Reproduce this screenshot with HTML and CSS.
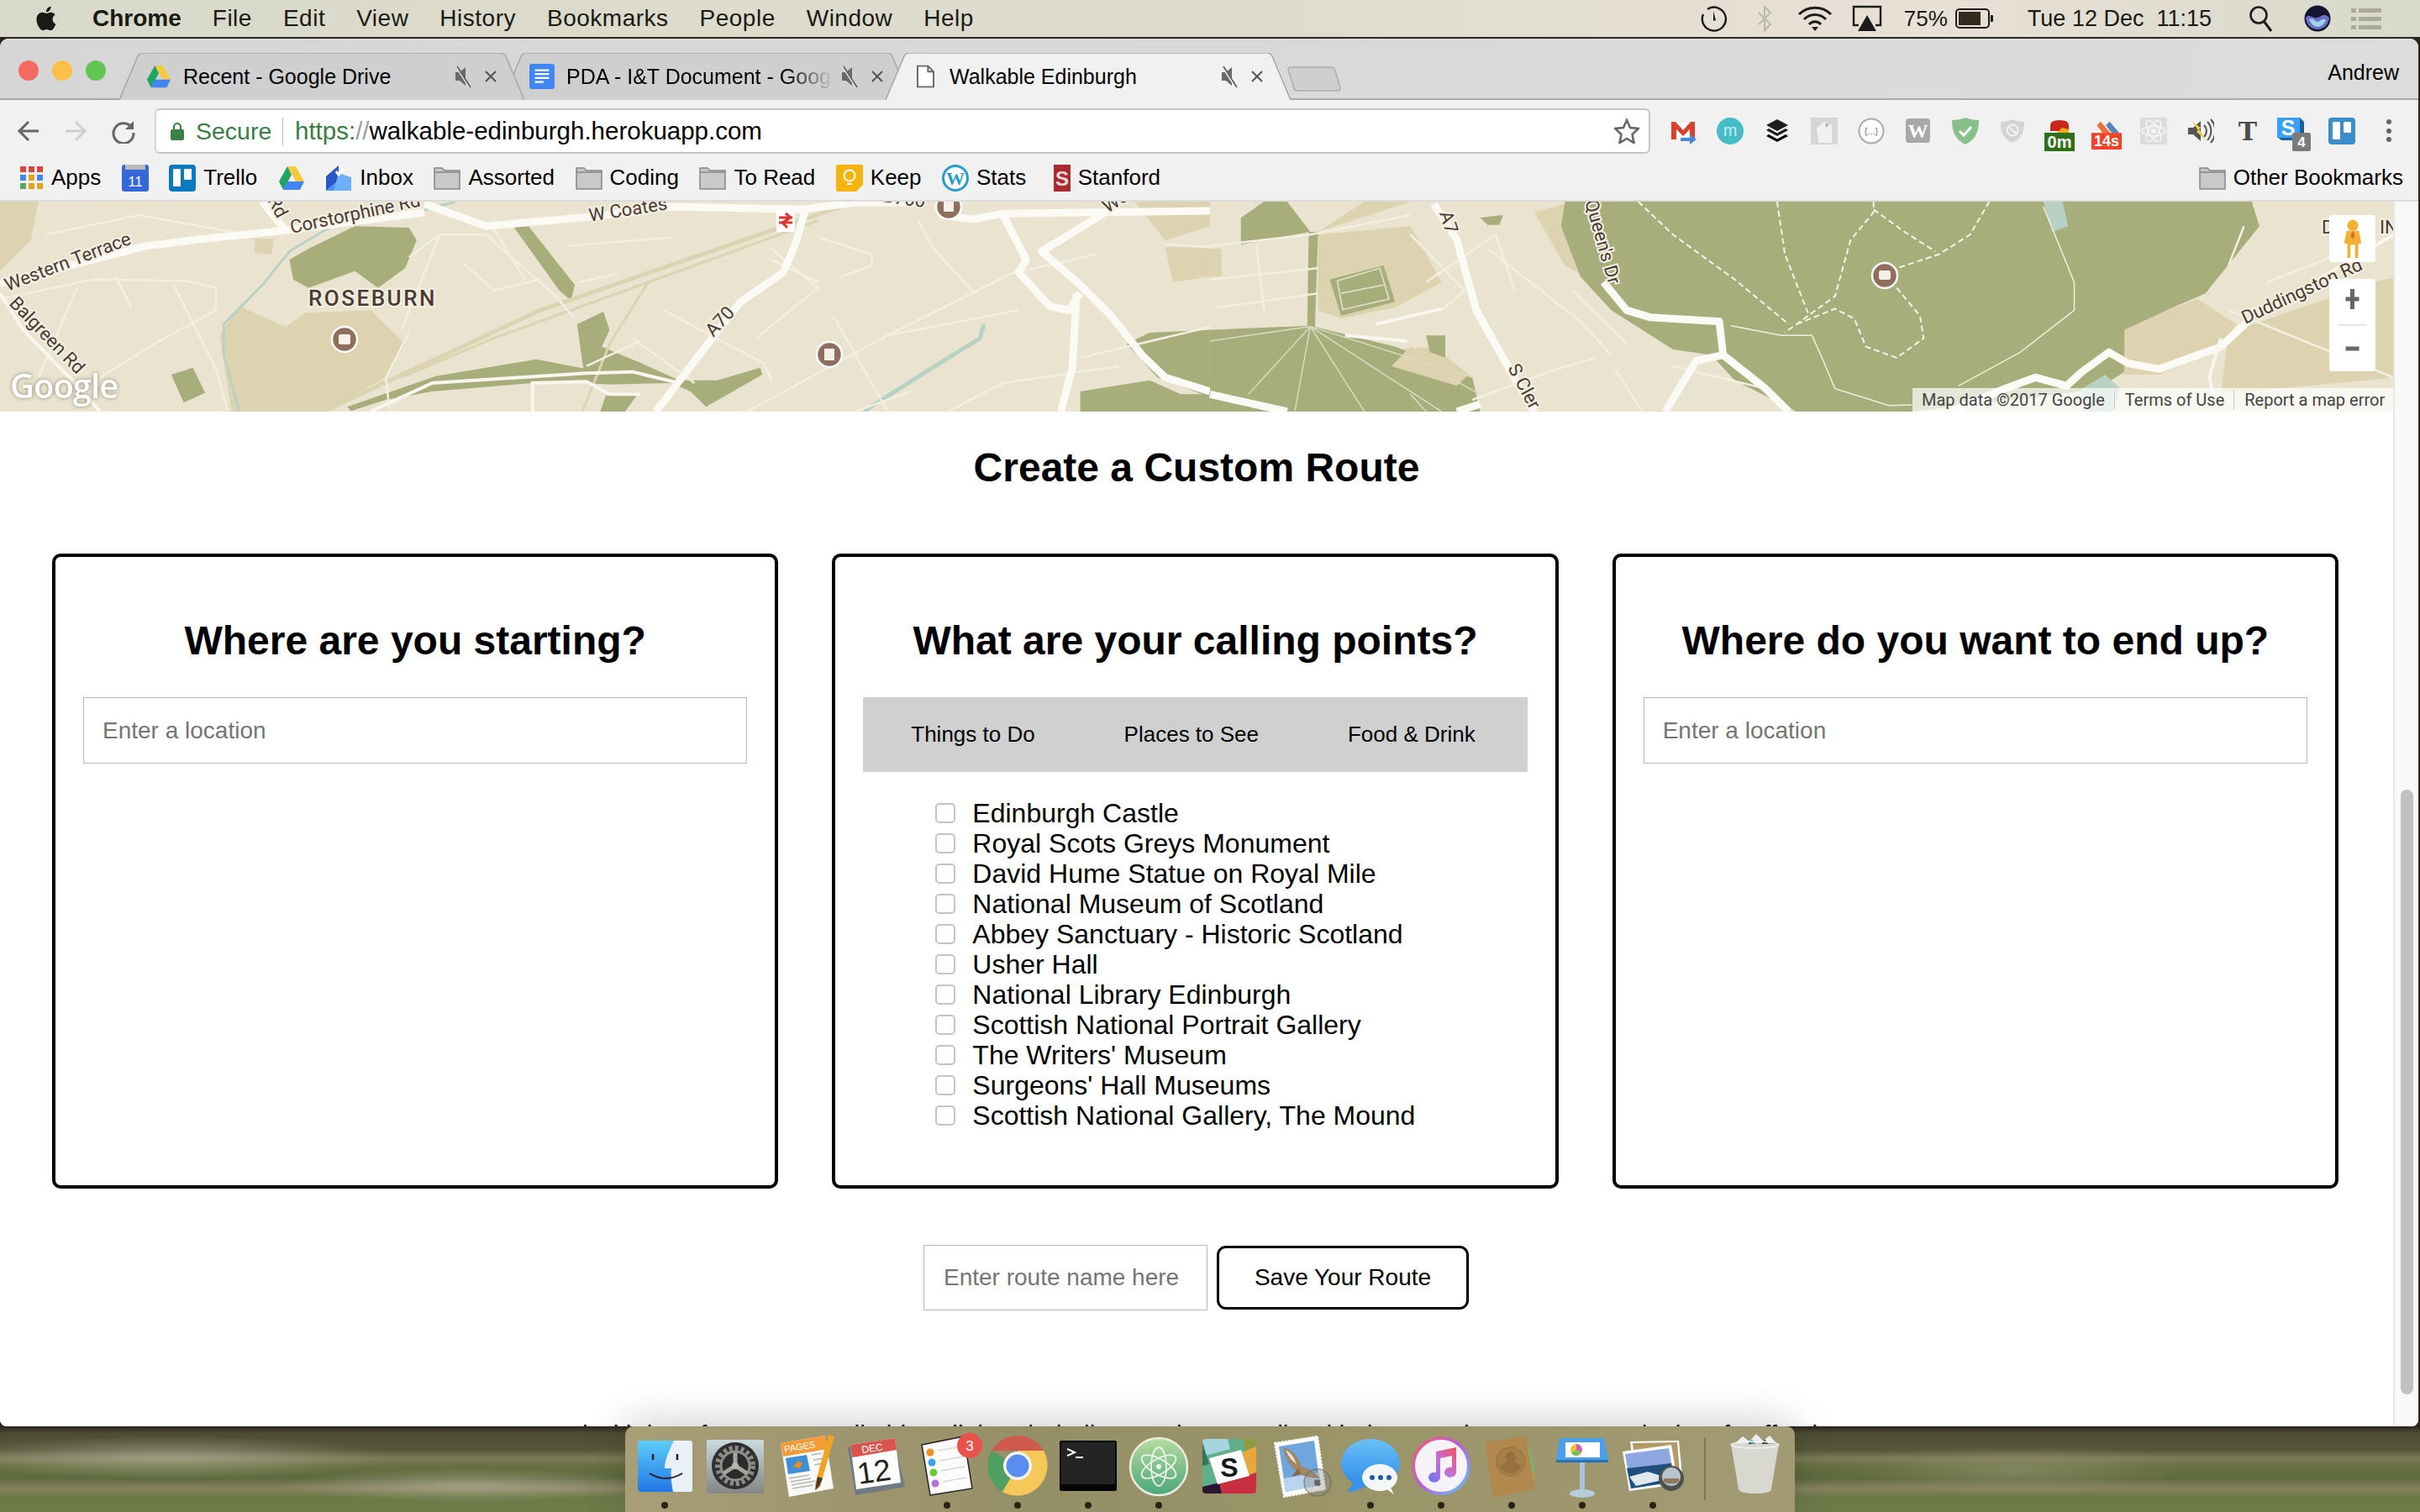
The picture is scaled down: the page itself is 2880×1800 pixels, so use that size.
FILE: index.html
```html
<!DOCTYPE html>
<html>
<head>
  <meta charset="UTF-8" />
  <title>Walkable Edinburgh</title>
  <link rel="stylesheet" href="styles.css">
</head>
<body>
  <!-- mac menu bar -->
  <div class="menubar">
    <svg class="apple" viewBox="0 0 24 24"><path d="M18.71 19.5c-.83 1.24-1.71 2.45-3.05 2.47-1.34.03-1.77-.79-3.29-.79-1.53 0-2 .77-3.27.82-1.31.05-2.3-1.32-3.14-2.53C4.25 17 2.94 12.45 4.7 9.39c.87-1.52 2.43-2.48 4.12-2.51 1.28-.02 2.5.87 3.29.87.78 0 2.26-1.07 3.81-.91.65.03 2.47.26 3.64 1.98-.09.06-2.17 1.28-2.15 3.81.03 3.02 2.65 4.03 2.68 4.04-.03.07-.42 1.44-1.38 2.83M13 3.5c.73-.83 1.94-1.46 2.94-1.5.13 1.17-.34 2.35-1.04 3.19-.69.85-1.83 1.51-2.95 1.42-.15-1.15.41-2.35 1.05-3.11z"/></svg>
    <span class="menu-app">Chrome</span>
    <span>File</span><span>Edit</span><span>View</span><span>History</span><span>Bookmarks</span><span>People</span><span>Window</span><span>Help</span>
    <div class="status">
      <svg class="st-tm" viewBox="0 0 32 32"><path d="M8 5a14 14 0 1 1-5 6" fill="none" stroke="#1c1c1c" stroke-width="2.4"/><path d="M15 7l3 11-3 1z" fill="#1c1c1c"/></svg>
      <svg class="st-bt" viewBox="0 0 20 32"><path d="M3 9l14 14-7 7V2l7 7L3 23" fill="none" stroke="#b9b8ac" stroke-width="2"/></svg>
      <svg class="st-wifi" viewBox="0 0 44 32"><g fill="none" stroke="#1c1c1c" stroke-width="3"><path d="M3 11a27 27 0 0 1 38 0"/><path d="M9 17a18 18 0 0 1 26 0"/><path d="M15 23a9 9 0 0 1 14 0"/></g><path d="M22 31l-4-5h8z" fill="#1c1c1c"/></svg>
      <svg class="st-air" viewBox="0 0 36 32"><path d="M8 24H2V2h32v22h-6" fill="none" stroke="#1c1c1c" stroke-width="2.4"/><path d="M18 12l11 19H7z" fill="#1c1c1c"/></svg>
      <span class="st-pct">75%</span>
      <svg class="st-batt" viewBox="0 0 46 26"><rect x="1" y="2" width="39" height="22" rx="4" fill="none" stroke="#1c1c1c" stroke-width="2"/><rect x="4" y="5" width="26" height="16" fill="#32291f"/><path d="M42 9h2a1 1 0 0 1 1 1v6a1 1 0 0 1-1 1h-2z" fill="#1c1c1c"/></svg>
      <span class="st-date">Tue 12 Dec&nbsp; 11:15</span>
      <svg class="st-search" viewBox="0 0 30 32"><circle cx="12" cy="12" r="9.5" fill="none" stroke="#1c1c1c" stroke-width="2.6"/><path d="M18 19l9 12" stroke="#1c1c1c" stroke-width="3"/></svg>
      <svg class="st-siri" viewBox="0 0 32 32"><circle cx="16" cy="16" r="15.5" fill="#14142e"/><path d="M2 15c5-6 8 2 14 0s8-6 14 0c-1 9-7 14-14 14S3 24 2 15z" fill="#6b6fc9"/><path d="M6 17c5-3 7 3 10 3s6-6 10-2c-2 5-6 8-10 8s-8-4-10-9z" fill="#9ed3e6"/></svg>
      <svg class="st-list" viewBox="0 0 36 28"><g fill="#a9a89b"><rect x="0" y="2" width="6" height="5"/><rect x="9" y="2" width="27" height="5"/><rect x="0" y="12" width="6" height="5"/><rect x="9" y="12" width="27" height="5"/><rect x="0" y="22" width="6" height="5"/><rect x="9" y="22" width="27" height="5"/></g></svg>
    </div>
  </div>

  <div class="window">
    <!-- tab strip -->
    <div class="titlebar">
      <div class="lights"><i class="red"></i><i class="yellow"></i><i class="green"></i></div>
      <div class="tab tab-first">
        <svg class="tab-shape" viewBox="0 0 482 56" preserveAspectRatio="none"><path d="M0 56L22 4Q24 0 28 0H454Q458 0 460 4L482 56"/></svg>
        <svg class="fav" viewBox="0 0 32 30"><path d="M11 1h10l10 18H21z" fill="#f7c93e"/><path d="M11 1L1 19l5 10 10-18z" fill="#1fa463"/><path d="M6 29h20l5-10H11z" fill="#4285f4"/></svg>
        <span class="tab-title">Recent - Google Drive</span>
        <svg class="mute" viewBox="0 0 22 30"><path d="M2 10h5l7-6v22l-7-6H2z" fill="#6a6a6a"/><path d="M3 3l16 25" stroke="#e0e0e0" stroke-width="3"/><path d="M4 3l16 25" stroke="#555" stroke-width="1.5"/></svg>
        <svg class="close" viewBox="0 0 16 16"><path d="M2 2l12 12M14 2L2 14" stroke="#555" stroke-width="2"/></svg>
      </div>
      <div class="tab tab-second">
        <svg class="tab-shape" viewBox="0 0 482 56" preserveAspectRatio="none"><path d="M0 56L22 4Q24 0 28 0H454Q458 0 460 4L482 56"/></svg>
        <svg class="fav" viewBox="0 0 32 32"><rect width="32" height="32" rx="3" fill="#4285f4"/><path d="M7 8h18M7 13h18M7 18h18M7 23h11" stroke="#fff" stroke-width="2.4"/></svg>
        <span class="tab-title tab-fade">PDA - I&amp;T Document - Google Docs</span>
        <svg class="mute" viewBox="0 0 22 30"><path d="M2 10h5l7-6v22l-7-6H2z" fill="#6a6a6a"/><path d="M3 3l16 25" stroke="#e0e0e0" stroke-width="3"/><path d="M4 3l16 25" stroke="#555" stroke-width="1.5"/></svg>
        <svg class="close" viewBox="0 0 16 16"><path d="M2 2l12 12M14 2L2 14" stroke="#555" stroke-width="2"/></svg>
      </div>
      <div class="tab tab-active">
        <svg class="tab-shape" viewBox="0 0 482 56" preserveAspectRatio="none"><path d="M0 56L22 4Q24 0 28 0H454Q458 0 460 4L482 56"/></svg>
        <svg class="fav fav-doc" viewBox="0 0 22 28"><path d="M1 1h13l7 7v19H1z" fill="#fff" stroke="#666" stroke-width="2"/><path d="M14 1v7h7" fill="none" stroke="#666" stroke-width="2"/></svg>
        <span class="tab-title">Walkable Edinburgh</span>
        <svg class="mute" viewBox="0 0 22 30"><path d="M2 10h5l7-6v22l-7-6H2z" fill="#6a6a6a"/><path d="M3 3l16 25" stroke="#f1f1f1" stroke-width="3"/><path d="M4 3l16 25" stroke="#555" stroke-width="1.5"/></svg>
        <svg class="close" viewBox="0 0 16 16"><path d="M2 2l12 12M14 2L2 14" stroke="#555" stroke-width="2"/></svg>
      </div>
      <svg class="newtab" viewBox="0 0 64 30"><path d="M4 1H52Q56 1 57 5L63 26Q63 29 60 29H12Q8 29 8 26L1 4Q1 1 4 1z" fill="#cfcfcf" stroke="#acacac" stroke-width="1.5"/></svg>
      <span class="profile">Andrew</span>
    </div>

    <!-- address bar -->
    <div class="toolbar">
      <svg class="nav nav-back" viewBox="0 0 30 30"><path d="M27 15H5M15 4L4 15l11 11" fill="none" stroke="#666" stroke-width="3"/></svg>
      <svg class="nav nav-fwd" viewBox="0 0 30 30"><path d="M3 15h22M15 4l11 11-11 11" fill="none" stroke="#cfcfcf" stroke-width="3"/></svg>
      <svg class="nav nav-reload" viewBox="0 0 30 30"><path d="M25 11A12 12 0 1 0 27 17" fill="none" stroke="#666" stroke-width="3"/><path d="M27 3v10H17z" fill="#666"/></svg>
      <div class="omnibox">
        <svg class="lock" viewBox="0 0 16 24"><path d="M4 10V7a4 4 0 0 1 8 0v3" fill="none" stroke="#3b8048" stroke-width="2.2"/><rect x="0" y="10" width="16" height="13" rx="2" fill="#3b8048"/></svg>
        <span class="secure">Secure</span>
        <span class="url"><span class="scheme">https:</span><span class="slashes">//</span>walkable-edinburgh.herokuapp.com</span>
        <svg class="star" viewBox="0 0 30 30"><path d="M15 2l4 9 10 1-7.500 7 2 10L15 24l-8.500 5 2-10L1 12l10-1z" fill="none" stroke="#666" stroke-width="2.600"/></svg>
      </div>
      <div class="extensions">
        <svg viewBox="0 0 32 32"><path d="M2 6h28v20H2z" fill="#fff"/><path d="M2 5h5l9 10 9-10h5v21h-6V14l-8 8-8-8v12H2z" fill="#d8402f"/><path d="M13 24h11v-4l8 6-8 6v-4H13z" fill="#4a86d8"/></svg>
        <svg viewBox="0 0 32 32"><circle cx="16" cy="16" r="16" fill="#46bcc4"/><text class="ext-m" x="16" y="22" text-anchor="middle">m</text></svg>
        <svg viewBox="0 0 32 32"><path d="M16 2l13 7-13 7-13-7z" fill="#1b1d20"/><path d="M6 13l10 5.500L26 13l3 2-13 7-13-7z" fill="#1b1d20"/><path d="M6 20l10 5.500L26 20l3 2-13 7-13-7z" fill="#000"/></svg>
        <svg viewBox="0 0 32 32"><rect width="32" height="32" fill="#d6d6d6"/><path d="M7 12l10-8 4 5 4-1v22H9z" fill="#f1f1f1"/><path d="M17 6l4 3-3 3z" fill="#aaa"/></svg>
        <svg viewBox="0 0 32 32"><circle cx="16" cy="16" r="14.500" fill="#fff" stroke="#aaa" stroke-width="2"/><text class="ext-code" x="16" y="20" text-anchor="middle">{...}</text></svg>
        <svg viewBox="0 0 32 32"><rect x="1" y="1" width="29" height="29" rx="4" fill="#a8a8a8"/><text class="ext-w" x="15.500" y="24" text-anchor="middle">W</text></svg>
        <svg viewBox="0 0 32 32"><path d="M16 0c5 2 10 3 16 3 0 14-4 23-16 29C4 26 0 17 0 3c6 0 11-1 16-3z" fill="#88c08b"/><path d="M9 16l5 5 9-10" fill="none" stroke="#fff" stroke-width="3"/></svg>
        <svg viewBox="0 0 32 32"><path d="M16 2c4 2 9 3 14 3 0 12-3 20-14 25C5 25 2 17 2 5c5 0 10-1 14-3z" fill="#d3d3d3"/><circle cx="16" cy="15" r="6.500" fill="none" stroke="#f3f3f3" stroke-width="2"/><path d="M12 11l8 8" stroke="#f3f3f3" stroke-width="2"/></svg>
        <svg class="ext-wide" viewBox="0 0 36 40"><path d="M7 16V9q0-6 11-6t11 6v7z" fill="#c9261c"/><path d="M15 18l6-6 8 2v4z" fill="#f2a71b"/><rect y="18" width="36" height="22" fill="#2f7016"/><text class="ext-badge" x="18" y="36" text-anchor="middle">0m</text></svg>
        <svg class="ext-wide" viewBox="0 0 40 40"><path d="M7 8l5-5 13 15h-10z" fill="#ef7036"/><path d="M19 8l5-5 13 15H27z" fill="#5b82bd"/><rect y="18" width="40" height="22" fill="#f0432a"/><text class="ext-badge" x="20" y="36" text-anchor="middle">14s</text></svg>
        <svg viewBox="0 0 32 32"><rect width="32" height="32" rx="2" fill="#dcdcdc"/><g fill="none" stroke="#f5f5f5" stroke-width="1.600"><ellipse cx="16" cy="16" rx="14" ry="6"/><ellipse cx="16" cy="16" rx="14" ry="6" transform="rotate(60 16 16)"/><ellipse cx="16" cy="16" rx="14" ry="6" transform="rotate(120 16 16)"/></g><circle cx="16" cy="16" r="3" fill="#f5f5f5"/></svg>
        <svg viewBox="0 0 32 32"><path d="M1 12h6l9-8v24l-9-8H1z" fill="#555"/><path d="M20 9a10 10 0 0 1 0 14M24 5a16 16 0 0 1 0 22M28 2a21 21 0 0 1 0 28" fill="none" stroke="#555" stroke-width="2"/><path d="M6 5l10 7-2 2 9 13-12-10 2-2z" fill="#efd63d"/></svg>
        <svg viewBox="0 0 32 32"><text class="ext-t" x="16" y="27" text-anchor="middle">T</text></svg>
        <svg class="ext-s" viewBox="0 0 42 42"><path d="M0 0h27l5 5v22H5l-5-4z" fill="#1d5f9c"/><rect width="27" height="24" fill="#38a1f3"/><text class="ext-sl" x="13" y="21" text-anchor="middle">S</text><rect x="18" y="18" width="22" height="22" rx="2" fill="#7a7a7a"/><text class="ext-four" x="29" y="35" text-anchor="middle">4</text></svg>
        <svg viewBox="0 0 32 32"><rect width="32" height="32" rx="4" fill="#3a8fcb"/><rect x="5" y="5" width="9" height="21" rx="1.500" fill="#fff"/><rect x="18" y="5" width="9" height="13" rx="1.500" fill="#fff"/></svg>
        <svg viewBox="0 0 32 32"><g fill="#666"><circle cx="16" cy="5" r="3"/><circle cx="16" cy="16" r="3"/><circle cx="16" cy="26" r="3"/></g></svg>
      </div>
    </div>

    <div class="bookmarks">
      <div class="bm"><svg class="bm-apps" viewBox="0 0 28 28"><g fill="#d9483b"><rect width="7" height="7"/><rect x="10" width="7" height="7"/><rect x="20" width="7" height="7"/></g><rect y="10" width="7" height="7" fill="#4285f4"/><rect x="10" y="10" width="7" height="7" fill="#e3a021"/><rect x="20" y="10" width="7" height="7" fill="#4285f4"/><g fill="#e3a021"><rect y="20" width="7" height="7" fill="#5aa85b"/><rect x="10" y="20" width="7" height="7"/><rect x="20" y="20" width="7" height="7"/></g></svg>Apps</div>
      <div class="bm"><svg class="bm-icon" viewBox="0 0 32 32"><rect width="32" height="32" rx="3" fill="#3468d8"/><rect x="4" width="24" height="6" fill="#b9b9b9"/><text class="bm-cal" x="16" y="26" text-anchor="middle">11</text></svg></div>
      <div class="bm"><svg class="bm-icon" viewBox="0 0 32 32"><rect width="32" height="32" rx="4" fill="#0b79bf"/><rect x="5" y="5" width="9" height="21" rx="1" fill="#fff"/><rect x="18" y="5" width="9" height="13" rx="1" fill="#fff"/></svg>Trello</div>
      <div class="bm"><svg class="bm-icon" viewBox="0 0 32 30"><path d="M11 1h10l10 18H21z" fill="#f7c93e"/><path d="M11 1L1 19l5 10 10-18z" fill="#1fa463"/><path d="M6 29h20l5-10H11z" fill="#4285f4"/></svg></div>
      <div class="bm"><svg class="bm-icon" viewBox="0 0 32 32"><path d="M1 14L16 1v18L1 31z" fill="#2a56c6"/><path d="M1 31l15-12h15v12z" fill="#4d90fe"/><path d="M16 10l15 5v16H10z" fill="#6eb0f7"/><path d="M13 8l3 4 6-8" fill="none" stroke="#fff" stroke-width="3"/></svg>Inbox</div>
      <div class="bm"><svg class="bm-folder" viewBox="0 0 32 28"><path d="M1 27V2h9l3 3h18v22z" fill="#c9c9c9" stroke="#868686" stroke-width="1.500"/><path d="M1 7h30" stroke="#868686" stroke-width="1.500"/></svg>Assorted</div>
      <div class="bm"><svg class="bm-folder" viewBox="0 0 32 28"><path d="M1 27V2h9l3 3h18v22z" fill="#c9c9c9" stroke="#868686" stroke-width="1.500"/><path d="M1 7h30" stroke="#868686" stroke-width="1.500"/></svg>Coding</div>
      <div class="bm"><svg class="bm-folder" viewBox="0 0 32 28"><path d="M1 27V2h9l3 3h18v22z" fill="#c9c9c9" stroke="#868686" stroke-width="1.500"/><path d="M1 7h30" stroke="#868686" stroke-width="1.500"/></svg>To Read</div>
      <div class="bm"><svg class="bm-icon" viewBox="0 0 32 32"><path d="M2 0h28a2 2 0 0 1 2 2v22l-8 8H2a2 2 0 0 1-2-2V2a2 2 0 0 1 2-2z" fill="#f6b40e"/><circle cx="16" cy="13" r="6.500" fill="none" stroke="#fff" stroke-width="2"/><path d="M13 23h6" stroke="#fff" stroke-width="2"/></svg>Keep</div>
      <div class="bm"><svg class="bm-icon" viewBox="0 0 32 32"><circle cx="16" cy="16" r="14.500" fill="#fff" stroke="#2a9ad0" stroke-width="3"/><text class="bm-wp" x="16" y="24" text-anchor="middle">W</text></svg>Stats</div>
      <div class="bm"><svg class="bm-stanford" viewBox="0 0 20 32"><rect width="20" height="32" fill="#a92a30"/><text class="bm-s" x="10" y="25" text-anchor="middle">S</text></svg>Stanford</div>
      <div class="bm bm-other"><svg class="bm-folder" viewBox="0 0 32 28"><path d="M1 27V2h9l3 3h18v22z" fill="#c9c9c9" stroke="#868686" stroke-width="1.500"/><path d="M1 7h30" stroke="#868686" stroke-width="1.500"/></svg>Other Bookmarks</div>
    </div>

    <div class="viewport">
      <div class="page">
        <div class="map">
          <svg class="map-canvas" viewBox="0 240 2848 250" preserveAspectRatio="none">
            <rect x="0" y="240" width="2848" height="250" fill="#e9e3cf"/>
            <!-- west half, traced from the full width crop -->
            <g transform="matrix(0.9183 0 0 0.3333 0 236)" class="layer">
              <polygon class="tan" points="0,12 50,12 40,150 0,260"/>
              <polygon class="tan" points="330,145 355,145 352,200 330,195"/>
              <polygon class="tan" points="285,490 310,385 370,460 395,410 480,400 525,520 500,640 420,762 300,762"/>
              <polygon class="tan" points="1470,12 1568,12 1568,100 1510,150 1490,80"/>
              <polygon class="tan" points="1510,175 1568,175 1568,280 1520,300"/>
              <polygon class="park" points="460,100 530,105 540,150 525,250 490,320 460,260 400,320 380,290 375,220 400,180"/>
              <polygon class="park" points="665,100 685,100 745,310 740,365 725,330"/>
              <polygon class="park" points="748,450 782,405 790,470 780,530 840,600 880,650 930,650 985,605 988,630 915,745 895,690 870,660 790,665 760,660 755,590"/>
              <polygon class="park" points="565,635 695,575 760,610 850,625 870,660 690,660 560,690 500,720 455,760 450,745"/>
              <polygon class="park" points="222,630 250,605 266,695 238,730"/>
              <polygon class="park" points="785,705 825,705 810,762 778,762"/>
              <polygon class="park" points="1460,520 1490,480 1568,470 1568,710 1500,640"/>
              <polygon class="park" points="1400,690 1490,650 1530,700 1568,700 1568,762 1400,762"/>
              <path class="rail" d="M1100 20L700 400L420 760"/>
              <path class="rail-thin" d="M1060 80L640 500L520 640M840 300L790 520L755 760"/>
              <path class="water" d="M590 12L540 50L430 100L375 190L340 310L290 450L290 560L310 760"/>
              <path class="water-wide" d="M1275 450L1270 500L1200 620L1120 760"/>
              <path class="minor" d="M0 360L120 290L240 295L280 320L280 400L200 520L130 640M60 130L180 60L300 120M150 280L170 390M225 310L280 610L295 760M100 320L50 640M570 130L630 130L720 350L745 430M520 470L570 130L530 210M530 480L500 640L505 762M600 230L640 330L700 290M735 170L870 140M750 300L800 270M980 500L1060 320L1000 180M1000 220L1060 300M1060 140L1130 200L1130 240L1090 280M1150 490L1310 270L1420 200M1510 165L1568 175M1320 400L1150 490L970 760M1080 420L1150 760M1400 570L1568 460M1190 80L1210 180L1260 330M820 500L900 660M860 400L990 590L1000 650M1180 690L1110 760M1450 600L1300 660L1230 760M640 110L680 290M760 600L830 510"/>
              <path class="road" d="M0 305L190 170L280 140L370 115"/>
              <path class="road" d="M370 115L340 12"/>
              <path class="road" d="M370 115L550 50"/>
              <path class="road" d="M550 20L630 100L770 65L870 30L1040 40L1110 15L1190 15"/>
              <path class="road" d="M1045 30L1030 170L1015 265L960 370L920 510L850 762"/>
              <path class="road" d="M1220 60L1260 75L1300 55L1430 50L1568 45"/>
              <path class="road" d="M1300 60L1330 220L1320 265L1360 385L1385 400L1400 340"/>
              <path class="road" d="M1430 55L1350 190L1400 310L1440 420L1480 560L1510 640L1568 690"/>
              <path class="road" d="M1395 340L1390 600L1375 762"/>
              <path class="road-thin" d="M0 340L30 470L90 640L130 762"/>
              <path class="road-thin" d="M480 762L560 660L760 625L820 620L880 660"/>
              <path class="road-thin" d="M690 762L690 660L760 655L790 700L830 700"/>
            </g>
            <!-- east half -->
            <g transform="matrix(0.9183 0 0 0.3333 1440 236)" class="layer">
              <polygon class="tan" points="200,12 260,12 140,120"/>
              <polygon class="tan" points="420,50 470,12 500,300 460,240"/>
              <polygon class="tan" points="140,130 260,100 300,300 240,390 170,430 140,400"/>
              <polygon class="tan" points="0,180 15,180 15,280 0,280"/>
              <polygon class="tan" points="240,540 290,530 340,640 300,660"/>
              <polygon class="park" points="460,12 1350,12 1360,100 1290,340 1240,400 1190,500 1185,620 1150,680 1100,700 910,762 760,762 680,650 650,560 600,540 520,400 480,280 455,100"/>
              <polygon class="tan" points="1185,470 1240,400 1280,360 1330,450 1310,530 1230,630 1185,630"/>
              <polygon class="tan" points="1320,480 1520,290 1534,285 1534,640 1310,700"/>
              <polygon class="park" points="0,470 130,455 240,530 340,640 350,762 0,762"/>
              <polygon class="park" points="40,70 70,12 100,12 130,120 40,165"/>
              <polygon class="park" points="128,120 140,120 136,460 126,460"/>
              <polygon class="park" points="350,70 380,60 375,95 360,95"/>
              <polygon class="park" points="280,490 305,490 305,570 285,550"/>
              <polygon class="park" points="155,290 225,240 240,370 170,420"/>
              <polygon class="tan" points="235,600 260,530 335,630 320,670"/>
              <path class="pitch" d="M165 295L220 250L232 360L172 398zM170 340L225 310"/>
              <polygon class="lake" points="1080,12 1105,12 1112,100 1092,120"/>
              <polygon class="lake" points="1130,680 1160,630 1180,680 1170,762 1130,762"/>
              <path class="minor" d="M0 170L130 130L260 60M0 290L140 250M10 390L140 340M60 170L70 400M360 180L480 440L520 560M470 330L540 520M280 300L370 130L395 330M500 570L450 610L340 720M525 610L560 760M600 600L720 680M1320 240L1340 100M1370 300L1500 160M1320 400L1534 640M260 130L330 330L300 400"/>
              <path class="fan" d="M130 458L0 510M130 458L50 700M130 458L110 760M130 458L200 762M130 458L300 762M130 458L340 640M260 700L280 762M310 640L350 700"/>
              <path class="road-thin" d="M215 450L300 395M175 490L255 510"/>
              <path class="trail" d="M555 12L600 130L680 290L750 450M735 12L745 200L775 410M860 12L860 50L830 150L810 350L780 410L745 480M1010 12L985 130L945 200L890 250M860 40L900 120L940 190M890 320L920 420L925 500L890 570L850 530L835 430L810 395L760 450"/>
              <path class="path-thin" d="M675 455L740 490L780 490L790 550L810 680L880 740L910 738M1080 30L1120 300L1120 400L1050 550L970 670"/>
              <path class="road" d="M290 20L320 150L345 400L390 620L420 762"/>
              <path class="road" d="M510 300L540 400L570 425L660 440L665 560L630 580L590 762"/>
              <path class="road" d="M665 560L720 680L750 762"/>
              <path class="road" d="M0 700L100 762M320 762L350 735"/>
              <path class="road" d="M1345 440L1310 530L1230 610L1190 590L1165 550L1130 620L1110 670L1070 640L1030 680L960 762"/>
              <path class="road-thin" d="M1310 500L1295 640L1305 762"/>
              <path class="road-thin" d="M1345 440L1534 130"/>
            </g>
            <!-- poi markers -->
            <g class="poi"><circle cx="410" cy="404" r="15"/><circle cx="987" cy="422" r="15"/><circle cx="2243" cy="328" r="15"/><circle cx="1129" cy="246" r="15"/></g>
            <g class="poi-glyph"><rect x="403" y="398" width="14" height="12" rx="2"/><rect x="981" y="415" width="12" height="14"/><rect x="2236" y="322" width="14" height="11" rx="2"/><rect x="1123" y="238" width="12" height="14"/></g>
            <rect x="924" y="252" width="22" height="24" fill="#fff"/>
            <path d="M927 259h16M927 265h16M935 254l6 5-10 6 6 6" fill="none" stroke="#e0322c" stroke-width="3"/>
            <!-- labels -->
            <g class="label">
              <text transform="translate(9 347) rotate(-21)">Western Terrace</text>
              <text transform="translate(347 278) rotate(-12)">Corstorphine Rd</text>
              <text transform="translate(318 238) rotate(62)">Rd</text>
              <text transform="translate(702 264) rotate(-9)">W Coates</text>
              <text transform="translate(10 362) rotate(46)">Balgreen Rd</text>
              <text transform="translate(849 402) rotate(-48)">A70</text>
              <text transform="translate(1050 240) rotate(8)">B700</text>
              <text transform="translate(1318 254) rotate(-32)">Wes</text>
              <text transform="translate(1713 254) rotate(72)">A7</text>
              <text transform="translate(1886 240) rotate(74)">Queen's Dr</text>
              <text transform="translate(1794 438) rotate(62)">S Cler</text>
              <text transform="translate(2672 386) rotate(-25)">Duddingston Rd</text>
              <text x="2763" y="278">D</text>
              <text x="2832" y="278">IN</text>
              <text class="label-place" x="367" y="364">ROSEBURN</text>
            </g>
            <text class="map-google" x="12" y="474">Google</text>
          </svg>
          <div class="map-peg">
            <svg viewBox="0 0 26 50"><circle cx="13" cy="8" r="7" fill="#f2b035"/><path d="M5 15h16l3 16-4 1v18h-4V33h-6v17H6V32l-4-1z" fill="#f2b035"/><path d="M13 15l3 6-3 5-3-5z" fill="#d5702c"/></svg>
          </div>
          <div class="map-zoom">
            <svg viewBox="0 0 40 110"><path d="M20 12v24M12 24h16" stroke="#666" stroke-width="5"/><path d="M3 55h34" stroke="#e6e6e6" stroke-width="2"/><path d="M12 83h16" stroke="#666" stroke-width="5"/></svg>
          </div>
          <div class="map-attr"><span>Map data ©2017 Google</span><span>Terms of Use</span><span>Report a map error</span></div>
        </div>

        <h1>Create a Custom Route</h1>

        <div class="columns">
          <div class="card">
            <h2>Where are you starting?</h2>
            <input type="text" class="location" placeholder="Enter a location">
          </div>
          <div class="card">
            <h2>What are your calling points?</h2>
            <div class="cat-tabs"><span>Things to Do</span><span>Places to See</span><span>Food &amp; Drink</span></div>
            <ul class="stops">
              <li><i class="check"></i>Edinburgh Castle</li>
              <li><i class="check"></i>Royal Scots Greys Monument</li>
              <li><i class="check"></i>David Hume Statue on Royal Mile</li>
              <li><i class="check"></i>National Museum of Scotland</li>
              <li><i class="check"></i>Abbey Sanctuary - Historic Scotland</li>
              <li><i class="check"></i>Usher Hall</li>
              <li><i class="check"></i>National Library Edinburgh</li>
              <li><i class="check"></i>Scottish National Portrait Gallery</li>
              <li><i class="check"></i>The Writers' Museum</li>
              <li><i class="check"></i>Surgeons' Hall Museums</li>
              <li><i class="check"></i>Scottish National Gallery, The Mound</li>
            </ul>
          </div>
          <div class="card">
            <h2>Where do you want to end up?</h2>
            <input type="text" class="location" placeholder="Enter a location">
          </div>
        </div>

        <div class="save-row">
          <input type="text" class="route-name" placeholder="Enter route name here">
          <button class="save">Save Your Route</button>
        </div>

        <p class="credit">Created with love for a more walkable Edinburgh, built on Ruby on Rails with the Google Maps API and a lot of coffee in 2017</p>
      </div>
      <div class="scrollbar"><div class="thumb"></div></div>
    </div>
  </div>

  <!-- dock sits over the bottom of the window -->
  <div class="dock">
    <div class="dock-item"><svg viewBox="0 0 84 88"><defs><linearGradient id="fb" x1="0" y1="0" x2="0" y2="1"><stop offset="0" stop-color="#5ccdf8"/><stop offset="1" stop-color="#2277e6"/></linearGradient></defs><rect x="10" y="17" width="65" height="61" rx="3" fill="#e9f0f8"/><path d="M13 17h40c-6 12-11 24-11 33h8c-1 10 0 18 2 28H13a3 3 0 0 1-3-3V20a3 3 0 0 1 3-3z" fill="url(#fb)"/><path d="M28 33v7M57 33v7" stroke="#222" stroke-width="2.500"/><path d="M24 56q19 12 39 0" fill="none" stroke="#1c1c1c" stroke-width="2"/></svg><i class="dot dot-on"></i></div>
    <div class="dock-item"><svg viewBox="0 0 84 88"><defs><linearGradient id="sp" x1="0" y1="0" x2="0" y2="1"><stop offset="0" stop-color="#c9dade"/><stop offset="1" stop-color="#858585"/></linearGradient></defs><rect x="8" y="16" width="68" height="64" rx="2" fill="url(#sp)"/><circle cx="42" cy="47" r="28" fill="#2f2f2f"/><circle cx="42" cy="47" r="21" fill="none" stroke="#8a8a86" stroke-width="6" stroke-dasharray="4 3"/><circle cx="42" cy="47" r="17" fill="#2b2b2b" stroke="#8f8f8a" stroke-width="3"/><path d="M42 47V31M42 47L28 56M42 47L56 56" stroke="#a5a5a0" stroke-width="5"/><circle cx="42" cy="47" r="4" fill="#b5b5b0"/></svg><i class="dot"></i></div>
    <div class="dock-item"><svg viewBox="0 0 84 88"><polygon points="12,20 65,11 75,74 22,84" fill="#f8f8f6"/><polygon points="12,20 65,11 68,27 15,36" fill="#f29c38"/><text class="ic-pages" transform="translate(17 31) rotate(-9)">PAGES</text><polygon points="18,38 43,34 47,53 21,57" fill="#3e8ed8"/><path d="M27 48l6-7 5 3-3 6z" fill="#f28c1f"/><path d="M22 62l24-4M24 66l24-4M25 70l28-5M26 74l24-4M49 34l12-2M51 40l12-2M52 46l10-2" stroke="#b5b5b5" stroke-width="1.500"/><path d="M69 10l7 2-17 60-5 4-1-7z" fill="#f0a325"/><path d="M56 60l6 2-4 9-5 5z" fill="#3a3a3a"/></svg><i class="dot"></i></div>
    <div class="dock-item"><svg viewBox="0 0 84 88"><polygon points="8,25 62,15 76,72 17,82" fill="#6e7a82"/><polygon points="11,22 64,14 71,67 18,75" fill="#fdfdfd"/><polygon points="11,22 64,14 66,28 13,37" fill="#d9544c"/><text class="ic-dec" transform="translate(25 32) rotate(-8)">DEC</text><text class="ic-day" transform="translate(21 69) rotate(-8)">12</text></svg><i class="dot"></i></div>
    <div class="dock-item"><svg viewBox="0 0 84 88"><polygon points="12,22 62,12 72,74 22,82" fill="#fbfbfb" stroke="#222" stroke-width="1.500"/><circle cx="22" cy="31" r="4.500" fill="#f08e25"/><circle cx="24" cy="43" r="4.500" fill="#3fa2ee"/><circle cx="26" cy="55" r="4.500" fill="#6cc93f"/><circle cx="28" cy="68" r="4.500" fill="#b872dc"/><path d="M31 29l28-5M33 41l28-5M35 53l28-5M37 66l28-5" stroke="#d8d8d8" stroke-width="1.500"/><circle cx="69" cy="23" r="15" fill="#e9524a"/><text class="ic-badge" x="69" y="29" text-anchor="middle">3</text></svg><i class="dot dot-on"></i></div>
    <div class="dock-item"><svg viewBox="0 0 84 88"><path d="M11 29A36 36 0 0 1 73 29H42z" fill="#cf5a4b"/><path d="M11 29A36 36 0 0 0 24 78L42 47z" fill="#4f9f62"/><path d="M73 29A36 36 0 0 1 24 78L42 47V29z" fill="#f4c95a"/><circle cx="42" cy="47" r="17" fill="#f3f3f3"/><circle cx="42" cy="47" r="13.500" fill="#5a8def"/></svg><i class="dot dot-on"></i></div>
    <div class="dock-item"><svg viewBox="0 0 84 88"><rect x="8" y="17" width="68" height="60" rx="2" fill="#050505"/><rect x="10" y="19" width="64" height="50" fill="#242424"/><path d="M17 27l9 4-9 4" fill="none" stroke="#fff" stroke-width="2"/><path d="M27 37h9" stroke="#fff" stroke-width="2"/></svg><i class="dot dot-on"></i></div>
    <div class="dock-item"><svg viewBox="0 0 84 88"><defs><linearGradient id="at" x1="0" y1="0" x2="0" y2="1"><stop offset="0" stop-color="#b8dca2"/><stop offset="1" stop-color="#4aa67a"/></linearGradient></defs><circle cx="42" cy="48" r="34" fill="url(#at)" stroke="#ecebe0" stroke-width="2.500"/><g fill="none" stroke="#ecf5e6" stroke-width="1.800"><ellipse cx="42" cy="48" rx="23" ry="9" transform="rotate(30 42 48)"/><ellipse cx="42" cy="48" rx="23" ry="9" transform="rotate(-30 42 48)"/><ellipse cx="42" cy="48" rx="23" ry="9" transform="rotate(90 42 48)"/></g><circle cx="42" cy="48" r="3" fill="#ecf5e6"/></svg><i class="dot dot-on"></i></div>
    <div class="dock-item"><svg viewBox="0 0 84 88"><rect x="10" y="15" width="64" height="65" rx="4" fill="#60ae8a"/><path d="M10 19a4 4 0 0 1 4-4h26l3 12-33 9z" fill="#a4d5e0"/><path d="M10 19l8 26-8 2z" fill="#35755e"/><path d="M58 15h16v9l-13 6z" fill="#8e9b42"/><path d="M57 31l17-7v31l-9 3z" fill="#e6a83c"/><path d="M30 67l35-9 9-3v21a4 4 0 0 1-4 4H33z" fill="#c83042"/><path d="M10 72l20-5 3 13H14a4 4 0 0 1-4-4z" fill="#2b1530"/><polygon points="18,38 56,28 66,59 28,69" fill="#fff"/><text class="ic-slack" x="42" y="60" text-anchor="middle">S</text></svg></div>
    <div class="dock-item"><svg viewBox="0 0 84 88"><polygon points="12,20 63,12 72,75 23,84" fill="#fff" stroke="#fff" stroke-width="2" stroke-dasharray="3 1"/><polygon points="17,24 59,17 66,70 25,78" fill="#6ea6dd"/><polygon points="22,62 65,55 66,70 25,78" fill="#b8d4ee"/><path d="M22 25Q38 29 44 48Q56 50 66 62Q48 62 38 54Q25 44 22 25z" fill="#a08866"/><path d="M25 28Q34 33 38 45Q30 40 25 28z" fill="#e8e2d6"/><path d="M40 50l-8 10 11-3z" fill="#8a6b3f"/><circle cx="63" cy="67" r="16" fill="#888" fill-opacity=".35" stroke="#666" stroke-opacity=".6" stroke-width="1.500"/><path transform="translate(57 60) scale(.5)" d="M18.71 19.5c-.83 1.24-1.71 2.45-3.05 2.47-1.34.03-1.77-.79-3.29-.79-1.53 0-2 .77-3.27.82-1.31.05-2.3-1.32-3.14-2.53C4.25 17 2.94 12.45 4.7 9.39c.87-1.52 2.43-2.48 4.12-2.51 1.28-.02 2.5.87 3.29.87.78 0 2.26-1.07 3.81-.91.65.03 2.47.26 3.64 1.98-.09.06-2.17 1.28-2.15 3.81.03 3.02 2.65 4.03 2.68 4.04-.03.07-.42 1.44-1.38 2.83z" fill="#666"/></svg></div>
    <div class="dock-item"><svg viewBox="0 0 84 88"><defs><linearGradient id="ms" x1="0" y1="0" x2="0" y2="1"><stop offset="0" stop-color="#6cc0f8"/><stop offset="1" stop-color="#2a8ae6"/></linearGradient></defs><ellipse cx="42" cy="44" rx="35" ry="29" fill="url(#ms)"/><path d="M22 62q-2 10-8 16 14 0 22-8z" fill="#3a93e8"/><ellipse cx="53" cy="61" rx="21" ry="16" fill="#f4f6f8"/><path d="M60 74l10 7-5-10z" fill="#f4f6f8"/><g fill="#1f5aa5"><circle cx="44" cy="61" r="3"/><circle cx="54" cy="61" r="3"/><circle cx="64" cy="61" r="3"/></g></svg><i class="dot dot-on"></i></div>
    <div class="dock-item"><svg viewBox="0 0 84 88"><defs><linearGradient id="it" x1="0" y1="0" x2="1" y2="1"><stop offset="0" stop-color="#f0626a"/><stop offset=".5" stop-color="#b660d8"/><stop offset="1" stop-color="#5ac8f5"/></linearGradient><linearGradient id="no" x1="1" y1="0" x2="0" y2="1"><stop offset="0" stop-color="#f5505f"/><stop offset=".5" stop-color="#c56fd8"/><stop offset="1" stop-color="#6a72f0"/></linearGradient></defs><circle cx="42" cy="47" r="33" fill="#f5f3f7" stroke="url(#it)" stroke-width="4"/><path d="M36 30l24-5v30a7 6 0 1 1-5-6V35l-14 3v23a7 6 0 1 1-5-6z" fill="url(#no)"/></svg><i class="dot dot-on"></i></div>
    <div class="dock-item"><svg viewBox="0 0 84 88"><path d="M62 20l7 48-4 2z" fill="#f4a62a"/><path d="M62 22l3 12 2 8 2 14-6-6z" fill="#63c36d"/><polygon points="10,19 59,11 70,75 20,85" fill="#b1894f"/><circle cx="41" cy="42" r="17" fill="#a67f48" stroke="#9a7642" stroke-width="1.500"/><path d="M41 30a6 7 0 0 1 4 12l9 5q-4 9-13 9t-13-9l9-5a6 7 0 0 1 4-12z" fill="#96713e"/></svg><i class="dot dot-on"></i></div>
    <div class="dock-item"><svg viewBox="0 0 84 88"><rect x="39" y="42" width="6" height="38" fill="#a9c4d8"/><ellipse cx="42" cy="80" rx="15" ry="5" fill="#b6cbdb"/><polygon points="15,14 68,14 73,40 11,40" fill="#4a9fea"/><rect x="11" y="40" width="62" height="3" fill="#2d6fb2"/><rect x="22" y="19" width="41" height="18" fill="#fff"/><circle cx="35" cy="28" r="7" fill="#f2c33a"/><path d="M35 28V21a7 7 0 0 1 6 10z" fill="#d25bb6"/><path d="M35 28l6 3a7 7 0 0 1-12 1z" fill="#72c25a"/></svg><i class="dot dot-on"></i></div>
    <div class="dock-item"><svg viewBox="0 0 84 88"><polygon points="15,18 73,17 77,58 20,60" fill="#fff"/><polygon points="18,20 71,19 74,55 22,57" fill="#b39a68"/><polygon points="6,30 64,22 72,69 14,77" fill="#fff"/><polygon points="9,33 61,26 68,66 16,74" fill="#8ea6e0"/><polygon points="11,50 64,44 68,66 16,74" fill="#1f4f7d"/><path d="M14 60l22-6 26 8-40 9z" fill="#dfe8ea"/><circle cx="64" cy="62" r="15" fill="#4f4f4f"/><circle cx="64" cy="60" r="11" fill="#b8c4cc"/><path d="M55 62h18v4q-9 5-18 0z" fill="#8d7a5c"/></svg><i class="dot dot-on"></i></div>
    <div class="dock-sep"></div>
    <div class="dock-item"><svg viewBox="0 0 84 88"><path d="M18 21L28 12l8 6 8-9 8 8 8-6 8 9z" fill="#eee"/><path d="M33 22l6-6 5 6zM50 22l4-7 5 7z" fill="#444"/><path d="M36 19l5-2 2 5z" fill="#3fb6d8"/><path d="M14 21h57l-9 54q-1 5-19 5t-20-5z" fill="#e2e2e0" fill-opacity=".85"/><ellipse cx="42.500" cy="22" rx="28.500" ry="4" fill="none" stroke="#f0f0ee" stroke-width="1.500"/></svg></div>
  </div>
</body>
</html>
```

FILE: styles.css
```css
* {
  box-sizing: border-box;
}

html, body {
  margin: 0;
  height: 100%;
}

body {
  position: relative;
  width: 2880px;
  height: 1800px;
  overflow: hidden;
  font-family: "Liberation Sans", Arial, sans-serif;
  color: #000;
  background:
    radial-gradient(ellipse 260px 26px at 200px 1735px, rgba(190, 185, 170, .55), transparent),
    radial-gradient(ellipse 220px 20px at 560px 1768px, rgba(200, 190, 175, .5), transparent),
    radial-gradient(ellipse 200px 30px at 2400px 1750px, rgba(165, 160, 130, .45), transparent),
    linear-gradient(to bottom,
      #2a261b 0, #2a261b 1698px,
      #4d4c34 1706px, #56583a 1726px, #7d7c58 1736px, #66703f 1746px,
      #5e6a3e 1760px, #878360 1772px, #6c7a48 1782px, #6f7c4a 1800px);
}

/* menu bar */
.menubar {
  display: flex;
  align-items: center;
  gap: 37px;
  height: 44px;
  padding-left: 41px;
  margin-bottom: 2px;
  font-size: 28px;
  letter-spacing: .5px;
  color: #1a1a14;
  background: linear-gradient(to right, #d9d9cb 0, #dcdbcc 800px, #dedccf 1500px, #e9e0d6 2300px, #d7d9cb 2880px);
}

.apple {
  width: 34px;
  height: 38px;
  margin: 0 1px 0 -3px;
  fill: #1a1a14;
}

.menu-app {
  font-weight: bold;
  letter-spacing: 0;
}

.status {
  display: flex;
  align-items: center;
  margin-left: auto;
  padding-right: 46px;
}

.status svg {
  display: block;
}

.st-tm { width: 32px; height: 32px; }
.st-bt { width: 20px; height: 32px; margin-left: 34px; }
.st-wifi { width: 44px; height: 32px; margin-left: 28px; }
.st-air { width: 36px; height: 32px; margin-left: 22px; }
.st-pct { margin-left: 26px; font-size: 26px; letter-spacing: 0; }
.st-batt { width: 46px; height: 26px; margin-left: 9px; }
.st-date { margin-left: 40px; white-space: nowrap; font-size: 27px; letter-spacing: 0; }
.st-search { width: 30px; height: 32px; margin-left: 44px; }
.st-siri { width: 32px; height: 32px; margin-left: 36px; }
.st-list { width: 36px; height: 28px; margin-left: 24px; }

/* browser window */
.window {
  display: flex;
  flex-direction: column;
  width: 2878px;
  height: 1652px;
  overflow: hidden;
  border-radius: 10px 10px 8px 8px;
  background: #fff;
}

.titlebar {
  position: relative;
  display: flex;
  align-items: flex-end;
  flex: none;
  height: 73px;
  padding-left: 142px;
  border-bottom: 2px solid #a9a9a9;
  background: linear-gradient(to right, #d6d6d6, #dcdcda);
}

.lights {
  position: absolute;
  left: 22px;
  top: 26px;
  display: flex;
  gap: 16px;
}

.lights i {
  width: 24px;
  height: 24px;
  border-radius: 50%;
}

.lights .red { background: #f46a60; }
.lights .yellow { background: #fbbf4c; }
.lights .green { background: #61c654; }

.tab {
  position: relative;
  display: flex;
  align-items: center;
  flex: none;
  width: 482px;
  height: 56px;
  margin-bottom: -2px;
  padding: 0 32px;
  font-size: 25px;
}

.tab > * {
  position: relative;
}

.tab-first { z-index: 2; }

.tab-second {
  z-index: 1;
  width: 486px;
  margin-left: -26px;
}

.tab-active {
  z-index: 3;
  margin-left: -30px;
  padding-left: 37px;
}

.tab .tab-shape {
  position: absolute;
  left: 0;
  top: 0;
  width: 100%;
  height: 100%;
  fill: #cfcfcf;
  stroke: #a6a6a6;
  stroke-width: 1.5;
}

.tab-active .tab-shape {
  fill: #f1f1f1;
}

.fav {
  flex: none;
  width: 30px;
  height: 30px;
  margin-right: 14px;
}

.fav-doc {
  width: 21px;
  height: 28px;
  margin-right: 18px;
}

.tab-title {
  flex: 1;
  overflow: hidden;
  white-space: nowrap;
}

.tab-fade {
  -webkit-mask-image: linear-gradient(to right, #000 82%, transparent 100%);
}

.mute {
  flex: none;
  width: 22px;
  height: 30px;
  margin: 0 14px 0 8px;
}

.close {
  flex: none;
  width: 16px;
  height: 16px;
}

.newtab {
  flex: none;
  width: 64px;
  height: 30px;
  margin: 0 0 8px -4px;
}

.profile {
  position: absolute;
  right: 23px;
  top: 26px;
  font-size: 25px;
}

.toolbar {
  display: flex;
  align-items: center;
  flex: none;
  height: 68px;
  padding-top: 6px;
  background: #f1f1f1;
}

.nav {
  flex: none;
  width: 30px;
  height: 30px;
}

.nav-back { margin-left: 19px; }
.nav-fwd { margin-left: 26px; }
.nav-reload { margin-left: 27px; }

.omnibox {
  display: flex;
  align-items: center;
  flex: none;
  width: 1780px;
  height: 54px;
  margin-left: 22px;
  padding: 0 11px 0 17px;
  border: 2px solid #c4c4c4;
  border-left-color: #d4d4d4;
  border-radius: 6px;
  background: #fff;
  font-size: 29.5px;
}

.lock {
  flex: none;
  width: 16px;
  height: 24px;
}

.secure {
  width: 104px;
  margin-left: 14px;
  padding-right: 10px;
  border-right: 1px solid #bbb;
  color: #3a7d44;
  font-size: 28.5px;
  white-space: nowrap;
}

.url {
  flex: 1;
  margin-left: 14px;
  white-space: nowrap;
}

.scheme { color: #3a7d44; }
.slashes { color: #9a9a9a; }

.star {
  flex: none;
  width: 30px;
  height: 30px;
}

.extensions {
  display: flex;
  align-items: center;
  margin-left: 11px;
}

.extensions svg {
  flex: none;
  width: 32px;
  height: 32px;
  margin: 0 12px;
}

.extensions .ext-wide {
  width: 36px;
  height: 40px;
  margin: 8px 10px 0;
}

.extensions .ext-s {
  width: 42px;
  height: 42px;
  margin: 10px 7px 0;
}

.ext-m { font-size: 20px; fill: #c8eef0; }
.ext-code { font-size: 11px; fill: #777; }
.ext-w { font-size: 24px; font-weight: bold; fill: #fff; font-family: "Liberation Serif", serif; }
.ext-badge { font-size: 20px; font-weight: bold; fill: #fff; }
.ext-t { font-size: 30px; font-weight: bold; fill: #4c4c4c; font-family: "DejaVu Serif", serif; }
.ext-sl { font-size: 25px; font-weight: bold; fill: #fff; }
.ext-four { font-size: 17px; font-weight: bold; fill: #fff; }

.bookmarks {
  display: flex;
  align-items: center;
  gap: 24.5px;
  flex: none;
  height: 53px;
  padding: 0 18px 2px 24px;
  border-bottom: 2px solid #dcdcdc;
  background: #f1f1f1;
  font-size: 26px;
  white-space: nowrap;
}

.bm {
  display: flex;
  align-items: center;
  gap: 9px;
}

.bm-other {
  margin-left: auto;
}

.bm-apps { width: 28px; height: 28px; }
.bm-icon { width: 32px; height: 32px; }
.bm-folder { width: 32px; height: 28px; }
.bm-stanford { width: 20px; height: 32px; margin-left: 8px; }
.bm-cal { font-size: 17px; fill: #fff; }
.bm-wp { font-size: 22px; font-weight: bold; fill: #2a9ad0; font-family: "Liberation Serif", serif; }
.bm-s { font-size: 24px; font-weight: bold; fill: #f0d8d8; }

/* page */
.viewport {
  display: flex;
  flex: 1;
  min-height: 0;
}

.page {
  flex: 1;
  min-width: 0;
  overflow: hidden;
  background: #fff;
}

.scrollbar {
  flex: none;
  width: 30px;
  padding: 700px 6px 0 7px;
  border-left: 2px solid #e8e8e8;
  background: #f9f9f9;
}

.thumb {
  height: 720px;
  border-radius: 8px;
  background: #c1c1c1;
}

.map {
  position: relative;
  height: 250px;
  overflow: hidden;
}

.map-canvas {
  display: block;
  width: 2848px;
  height: 250px;
}

.layer path, .layer polygon {
  vector-effect: non-scaling-stroke;
  fill: none;
}

.layer .tan { fill: #ddd3b0; }
.layer .park { fill: #a8ad7c; }
.layer .lake { fill: #b9d1c4; }
.layer .road { stroke: #fbfaf5; stroke-width: 9; stroke-linejoin: round; }
.layer .road-thin { stroke: #f8f6ee; stroke-width: 4; }
.layer .minor { stroke: #f3efe1; stroke-width: 2.5; }
.layer .rail { stroke: #dcd3b3; stroke-width: 5; }
.layer .rail-thin { stroke: #dcd3b3; stroke-width: 3; }
.layer .water { stroke: #b9d1c4; stroke-width: 3; }
.layer .water-wide { stroke: #b9d1c4; stroke-width: 5; }
.layer .fan { stroke: #d9dcc1; stroke-width: 1.5; }
.layer .pitch { stroke: #e4e7d2; stroke-width: 1.5; }
.layer .trail { stroke: #f4f4e8; stroke-width: 2; stroke-dasharray: 7 4; }
.layer .path-thin { stroke: #eef0dd; stroke-width: 1.5; }

.poi circle { fill: #8e6f5d; stroke: #fff; stroke-width: 2.5; }
.poi-glyph rect { fill: #f5efe9; }

.label text {
  font-family: Roboto, sans-serif;
  font-size: 22px;
  fill: #4a3a35;
  stroke: #f4f0e2;
  stroke-width: 4px;
  paint-order: stroke;
}

.label .label-place {
  font-size: 26px;
  font-weight: 500;
  letter-spacing: 2.5px;
}

.map-google {
  font-family: "Open Sans", sans-serif;
  font-size: 40px;
  font-weight: 600;
  fill: #fff;
  letter-spacing: -1px;
  filter: drop-shadow(0 0 2px rgba(60, 50, 30, .55));
}

.map-peg {
  position: absolute;
  left: 2772px;
  top: 16px;
  display: flex;
  justify-content: center;
  align-items: center;
  width: 55px;
  height: 56px;
  border-radius: 3px;
  background: #fff;
}

.map-peg svg {
  width: 24px;
  height: 48px;
}

.map-zoom {
  position: absolute;
  left: 2772px;
  top: 92px;
  width: 55px;
  height: 110px;
  border-radius: 3px;
  background: #fff;
}

.map-zoom svg {
  display: block;
  width: 55px;
  height: 110px;
}

.map-attr {
  position: absolute;
  right: 0;
  bottom: 0;
  display: flex;
  width: 572px;
  height: 28px;
  align-items: center;
  padding-left: 11px;
  background: rgba(255, 255, 255, .7);
  font-family: Roboto, sans-serif;
  font-size: 20px;
  color: #444;
  white-space: nowrap;
}

.map-attr span + span {
  margin-left: 11px;
  padding-left: 12px;
  border-left: 1px solid #ccc;
}

h1 {
  margin: 44px 0 0;
  height: 46px;
  font-size: 48px;
  line-height: 46px;
  text-align: center;
}

.columns {
  display: grid;
  grid-template-columns: repeat(3, 1fr);
  gap: 64px;
  height: 756px;
  margin-top: 79px;
  padding: 0 65px 0 62px;
}

.card {
  padding: 0 33px;
  border: 4px solid #000;
  border-radius: 10px;
  background: #fff;
}

.card h2 {
  margin: 72px 0 39px;
  font-size: 48px;
  line-height: 56px;
  text-align: center;
  white-space: nowrap;
}

input {
  font-family: inherit;
  font-size: 28px;
  color: #000;
  background: #fff;
  border: 1px solid #b8b8b8;
  border-radius: 0;
  outline: none;
}

input::placeholder {
  color: #757575;
  opacity: 1;
}

.location {
  display: block;
  width: 100%;
  height: 79px;
  padding: 0 22px;
}

.cat-tabs {
  display: flex;
  justify-content: space-around;
  align-items: center;
  height: 89px;
  padding: 0 9px 0 4px;
  background: #d0d0d0;
  font-size: 26px;
}

.stops {
  margin: 31px 0 0;
  padding: 0 0 0 86px;
  list-style: none;
  font-size: 32px;
}

.stops li {
  display: flex;
  align-items: center;
  gap: 20px;
  height: 36px;
  white-space: nowrap;
}

.check {
  flex: none;
  width: 24px;
  height: 24px;
  border: 2px solid #c4c4c4;
  border-radius: 5px;
  background: #fff;
}

.save-row {
  display: flex;
  justify-content: flex-start;
  align-items: center;
  gap: 11px;
  margin: 67px 0 0 1099px;
}

.route-name {
  width: 338px;
  height: 78px;
  padding: 0 23px;
}

.save {
  width: 300px;
  height: 76px;
  padding: 0;
  border: 3px solid #000;
  border-radius: 11px;
  background: #fff;
  font-family: inherit;
  font-size: 28px;
  color: #000;
}

.credit {
  margin: 131px 0 0;
  font-size: 30px;
  text-align: center;
  white-space: nowrap;
}

/* dock */
.dock {
  position: absolute;
  left: 744px;
  top: 1698px;
  display: flex;
  width: 1392px;
  height: 102px;
  padding-left: 5px;
  border-radius: 10px 10px 0 0;
  background: linear-gradient(to right, #a89e78 0, #958f68 35%, #9a9468 60%, #a29a74 100%);
  box-shadow: 0 -4px 50px rgba(0, 0, 0, .2);
}

.dock-item {
  display: flex;
  flex-direction: column;
  align-items: center;
  flex: none;
  width: 84px;
}

.dock-item svg {
  display: block;
  width: 84px;
  height: 88px;
}

.dot {
  width: 8px;
  height: 8px;
  margin-top: 2px;
  border-radius: 50%;
}

.dot-on {
  background: #2a2310;
}

.dock-sep {
  flex: none;
  width: 2px;
  height: 74px;
  margin: 14px 16px 0 19px;
  background: #7d7555;
}

.ic-pages { font-size: 11px; fill: #fff; }
.ic-dec { font-size: 12px; fill: #fff; }
.ic-day { font-size: 36px; fill: #222; }
.ic-badge { font-size: 17px; fill: #fff; }
.ic-slack { font-size: 32px; font-weight: bold; fill: #16161a; }
```
